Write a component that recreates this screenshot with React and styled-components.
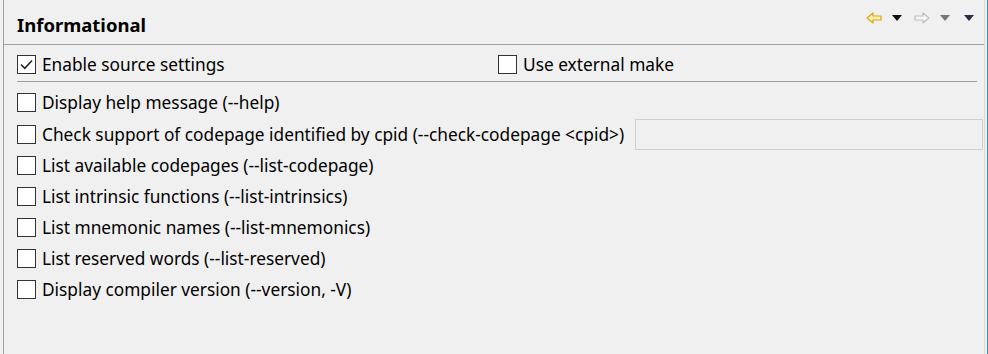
import React from "react";
import styled, { createGlobalStyle } from "styled-components";

const GlobalStyle = createGlobalStyle`
  html, body {
    margin: 0;
    padding: 0;
    background: #f0f0f0;
  }
  body {
    font-family: "Noto Sans", "Open Sans", sans-serif;
    color: #000;
  }
`;

const Frame = styled.div`
  width: 988px;
  height: 354px;
  box-sizing: border-box;
  display: flex;
  padding-left: 3px;
  padding-right: 2px;
  border-right: 1px solid #2a8fd0;
  background: #f0f0f0;
  overflow: hidden;
`;

const Panel = styled.div`
  flex: 1;
  display: flex;
  flex-direction: column;
  border-left: 1px solid #a0a0a0;
  border-right: 1px solid #d8d8d8;
`;

const Header = styled.div`
  height: 44px;
  display: flex;
  align-items: center;
  justify-content: space-between;
  padding-left: 13px;
  padding-right: 10px;
  border-bottom: 1px solid #a0a0a0;
  box-sizing: content-box;
`;

const Title = styled.h1`
  margin: 0;
  font-size: 18.5px;
  font-weight: 700;
  position: relative;
  top: 2px;
`;

const Toolbar = styled.div`
  display: flex;
  align-items: center;
  margin-top: -8px;
`;

const Tool = styled.span`
  display: flex;
  margin-left: ${(p) => p.$gap || 0}px;
`;

const Body = styled.div`
  padding-left: 13px;
  padding-right: 1px;
`;

const TopRow = styled.div`
  height: 37px;
  padding-top: 3px;
  display: grid;
  grid-template-columns: 481px 1fr;
  align-items: center;
  border-bottom: 1px solid #a0a0a0;
  margin-right: 6px;
  box-sizing: border-box;
`;

const List = styled.div`
  padding-top: 5px;
  display: flex;
  flex-direction: column;
`;

const Row = styled.div`
  height: ${(p) => (p.$tall ? 32 : 31)}px;
  display: flex;
  align-items: center;
`;

const Option = styled.label`
  display: flex;
  align-items: center;
  gap: 6px;
  font-size: 17.3px;
  white-space: nowrap;
`;

const Box = styled.span`
  width: 19px;
  height: 19px;
  box-sizing: border-box;
  border: 1px solid #333;
  background: #fff;
  display: flex;
  align-items: center;
  justify-content: center;
  flex-shrink: 0;
`;

const Field = styled.div`
  flex: 1;
  height: 31px;
  margin-left: 11px;
  box-sizing: border-box;
  border: 1px solid #cfcfcf;
  background: #f0f0f0;
`;

const Check = ({ checked, children }) => (
  <Option>
    <Box>
      {checked && (
        <svg width="13" height="11" viewBox="0 0 13 11">
          <path d="M1 5.5 L4.8 9.3 L12 1.5" fill="none" stroke="#222" strokeWidth="1.5" />
        </svg>
      )}
    </Box>
    {children}
  </Option>
);

const BackArrow = () => (
  <svg width="16" height="12" viewBox="0 0 16 12">
    <path d="M1 6 L7 1 L7 4 L15 4 L15 8 L7 8 L7 11 Z" fill="#fff2a8" stroke="#d9a41c" strokeWidth="1.2" strokeLinejoin="round" />
  </svg>
);

const FwdArrow = () => (
  <svg width="16" height="12" viewBox="0 0 16 12">
    <path d="M15 6 L9 1 L9 4 L1 4 L1 8 L9 8 L9 11 Z" fill="#f6f6f6" stroke="#bdbdbd" strokeWidth="1.2" strokeLinejoin="round" />
  </svg>
);

const Drop = ({ color }) => (
  <svg width="10" height="6" viewBox="0 0 10 6">
    <path d="M0 0 L10 0 L5 6 Z" fill={color} />
  </svg>
);

const options = [
  "Display help message (--help)",
  "Check support of codepage identified by cpid (--check-codepage <cpid>)",
  "List available codepages (--list-codepage)",
  "List intrinsic functions (--list-intrinsics)",
  "List mnemonic names (--list-mnemonics)",
  "List reserved words (--list-reserved)",
  "Display compiler version (--version, -V)",
];

export default function App() {
  return (
    <Frame>
      <GlobalStyle />
      <Panel>
        <Header>
          <Title>Informational</Title>
          <Toolbar>
            <Tool><BackArrow /></Tool>
            <Tool $gap={10}><Drop color="#111" /></Tool>
            <Tool $gap={12}><FwdArrow /></Tool>
            <Tool $gap={10}><Drop color="#777" /></Tool>
            <Tool $gap={14}><Drop color="#2a2a4a" /></Tool>
          </Toolbar>
        </Header>
        <Body>
          <TopRow>
            <Check checked>Enable source settings</Check>
            <Check>Use external make</Check>
          </TopRow>
          <List>
            {options.map((o, i) => (
              <Row key={o} $tall={i === 1}>
                <Check>{o}</Check>
                {i === 1 && <Field />}
              </Row>
            ))}
          </List>
        </Body>
      </Panel>
    </Frame>
  );
}
